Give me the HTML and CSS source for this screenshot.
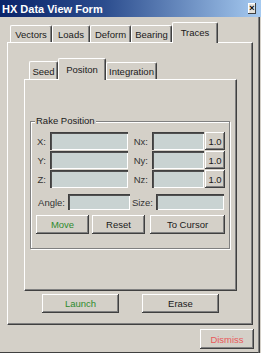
FILE: index.html
```html
<!DOCTYPE html>
<html>
<head>
<meta charset="utf-8">
<link rel="stylesheet" href="styles.css">
</head>
<body>
<div class="window">
  <div class="titlebar">
    <span class="title">HX Data View Form</span>
    <span class="close">×</span>
  </div>
  <div class="client">
    <div class="tabs">
      <div class="tab w-vectors">Vectors</div>
      <div class="tab w-loads">Loads</div>
      <div class="tab w-deform">Deform</div>
      <div class="tab w-bearing">Bearing</div>
      <div class="tab sel w-traces">Traces</div>
    </div>
    <div class="panel">
      <div class="itabs">
        <div class="itab w-seed">Seed</div>
        <div class="itab sel w-pos">Positon</div>
        <div class="itab w-int">Integration</div>
      </div>
      <div class="ipanel">
        <div class="group">
          <span class="legend">Rake Position</span>
          <div class="row">
            <span class="lbl l1">X:</span><span class="field f1"></span>
            <span class="lbl l2">Nx:</span><span class="field f2"></span><span class="btn small">1.0</span>
          </div>
          <div class="row">
            <span class="lbl l1">Y:</span><span class="field f1"></span>
            <span class="lbl l2">Ny:</span><span class="field f2"></span><span class="btn small">1.0</span>
          </div>
          <div class="row">
            <span class="lbl l1">Z:</span><span class="field f1"></span>
            <span class="lbl l2">Nz:</span><span class="field f2"></span><span class="btn small">1.0</span>
          </div>
          <div class="row arow">
            <span class="lbl la">Angle:</span><span class="field fa"></span>
            <span class="lbl ls">Size:</span><span class="field fs"></span>
          </div>
          <div class="brow">
            <span class="btn green b-move">Move</span>
            <span class="btn b-reset">Reset</span>
            <span class="btn b-cursor">To Cursor</span>
          </div>
        </div>
      </div>
      <div class="lrow">
        <span class="btn green b-launch">Launch</span>
        <span class="btn b-erase">Erase</span>
      </div>
    </div>
    <div class="drow">
      <span class="btn red b-dismiss">Dismiss</span>
    </div>
  </div>
</div>
</body>
</html>
```
FILE: styles.css
```css
* { box-sizing: border-box; }
html, body { margin: 0; padding: 0; }
body {
  background: #d4d0c8;
  font-family: "Liberation Sans", Arial, sans-serif;
  font-size: 9.5px;
  color: #1a1a1a;
  width: 261px;
  height: 353px;
  overflow: hidden;
}
.window {
  width: 261px;
  height: 353px;
  display: flex;
  flex-direction: column;
}
.titlebar {
  height: 17px;
  background: linear-gradient(to right, #0a246a 0%, #2c4d8e 40%, #a6caf0 100%);
  display: flex;
  align-items: center;
  padding: 0 3px 0 2px;
}
.title {
  color: #fff;
  font-weight: bold;
  font-size: 11px;
  flex: 1;
}
.close {
  width: 8px;
  height: 11px;
  margin-right: 2px;
  background: #e4e2dc;
  box-shadow: inset -1px -1px #404040, inset 1px 1px #fff;
  font-size: 9px;
  line-height: 10px;
  text-align: center;
  font-weight: bold;
  color: #000;
}
.client {
  flex: 1;
  width: 259px;
  border-right: 1px solid #808080;
  border-bottom: 1px solid #404040;
  box-shadow: 1px 0 #404040;
}
.tabs {
  display: flex;
  align-items: flex-end;
  margin: 5px 0 0 10px;
  height: 20px;
}
.tab, .itab {
  height: 17px;
  border-top: 1px solid #fff;
  border-left: 1px solid #fff;
  border-right: 1px solid #404040;
  box-shadow: inset -1px 0 #808080;
  border-radius: 2px 2px 0 0;
  display: flex;
  align-items: center;
  justify-content: center;
  background: #d4d0c8;
  padding-top: 1px;
}
.tab.sel, .itab.sel {
  height: 21px;
  margin-bottom: -1px;
  position: relative;
  z-index: 1;
  padding-top: 0;
  padding-bottom: 1px;
}
.w-vectors { width: 42px; }
.w-loads { width: 38px; }
.w-deform { width: 41px; }
.w-bearing { width: 41px; }
.w-traces { width: 46px; }
.panel {
  margin-left: 7px;
  width: 246px;
  height: 283px;
  border-top: 1px solid #fff;
  border-left: 1px solid #fff;
  border-right: 1px solid #404040;
  border-bottom: 1px solid #404040;
  box-shadow: inset -1px -1px #808080;
  padding: 15px 0 0 16px;
}
.itabs {
  display: flex;
  align-items: flex-end;
  height: 21px;
  margin-left: 5px;
}
.itab { height: 18px; }
.itab.sel { height: 22px; }
.w-seed { width: 29px; }
.w-pos { width: 48px; }
.w-int { width: 51px; height: 17px !important; }
.ipanel {
  width: 213px;
  height: 212px;
  border-top: 1px solid #fff;
  border-left: 1px solid #fff;
  border-right: 1px solid #404040;
  border-bottom: 1px solid #404040;
  box-shadow: inset -1px -1px #808080;
  padding: 41px 0 0 5px;
}
.group {
  position: relative;
  width: 200px;
  height: 128px;
  border: 1px solid #808080;
  box-shadow: inset 1px 1px #fff, 1px 1px #fff;
  padding: 10px 0 0 4px;
}
.legend {
  position: absolute;
  left: 4px;
  top: -7px;
  padding: 0 1px;
  background: #d4d0c8;
  line-height: 12px;
}
.row {
  display: flex;
  align-items: center;
  height: 18px;
  margin-bottom: 1px;
}
.lbl {
  text-align: right;
  padding-right: 4px;
  color: #333;
}
.l1 { width: 15px; }
.l2 { width: 24px; }
.la { width: 33px; padding-right: 3px; }
.ls { width: 26px; padding-right: 3px; }
.field {
  height: 100%;
  background: #c9d3d2;
  box-shadow: inset 1px 1px #404040, inset 2px 2px #505050, inset -1px -1px #fff;
}
.f1 { width: 78px; }
.f2 { width: 52px; margin-right: 1px; }
.arow { margin-top: 6px; height: 16px; }
.fa { width: 62px; }
.fs { width: 68px; }
.btn {
  display: flex;
  align-items: center;
  justify-content: center;
  background: #d4d0c8;
  box-shadow: inset -1px -1px #404040, inset 1px 1px #fff, inset -2px -2px #808080;
  color: #1a1a1a;
}
.small { width: 20px; height: 18px; }
.green { color: #2e8b2e; }
.red { color: #e85a5a; }
.brow {
  display: flex;
  margin: 5px 0 0 1px;
  height: 19px;
}
.b-move { width: 53px; }
.b-reset { width: 53px; margin-left: 3px; }
.b-cursor { width: 75px; margin-left: 5px; }
.lrow {
  display: flex;
  margin: 3px 0 0 18px;
  height: 19px;
}
.b-launch { width: 77px; }
.b-erase { width: 77px; margin-left: 23px; }
.drow {
  display: flex;
  justify-content: flex-end;
  margin-top: 4px;
  padding-right: 4px;
}
.b-dismiss { width: 54px; height: 20px; }
```
